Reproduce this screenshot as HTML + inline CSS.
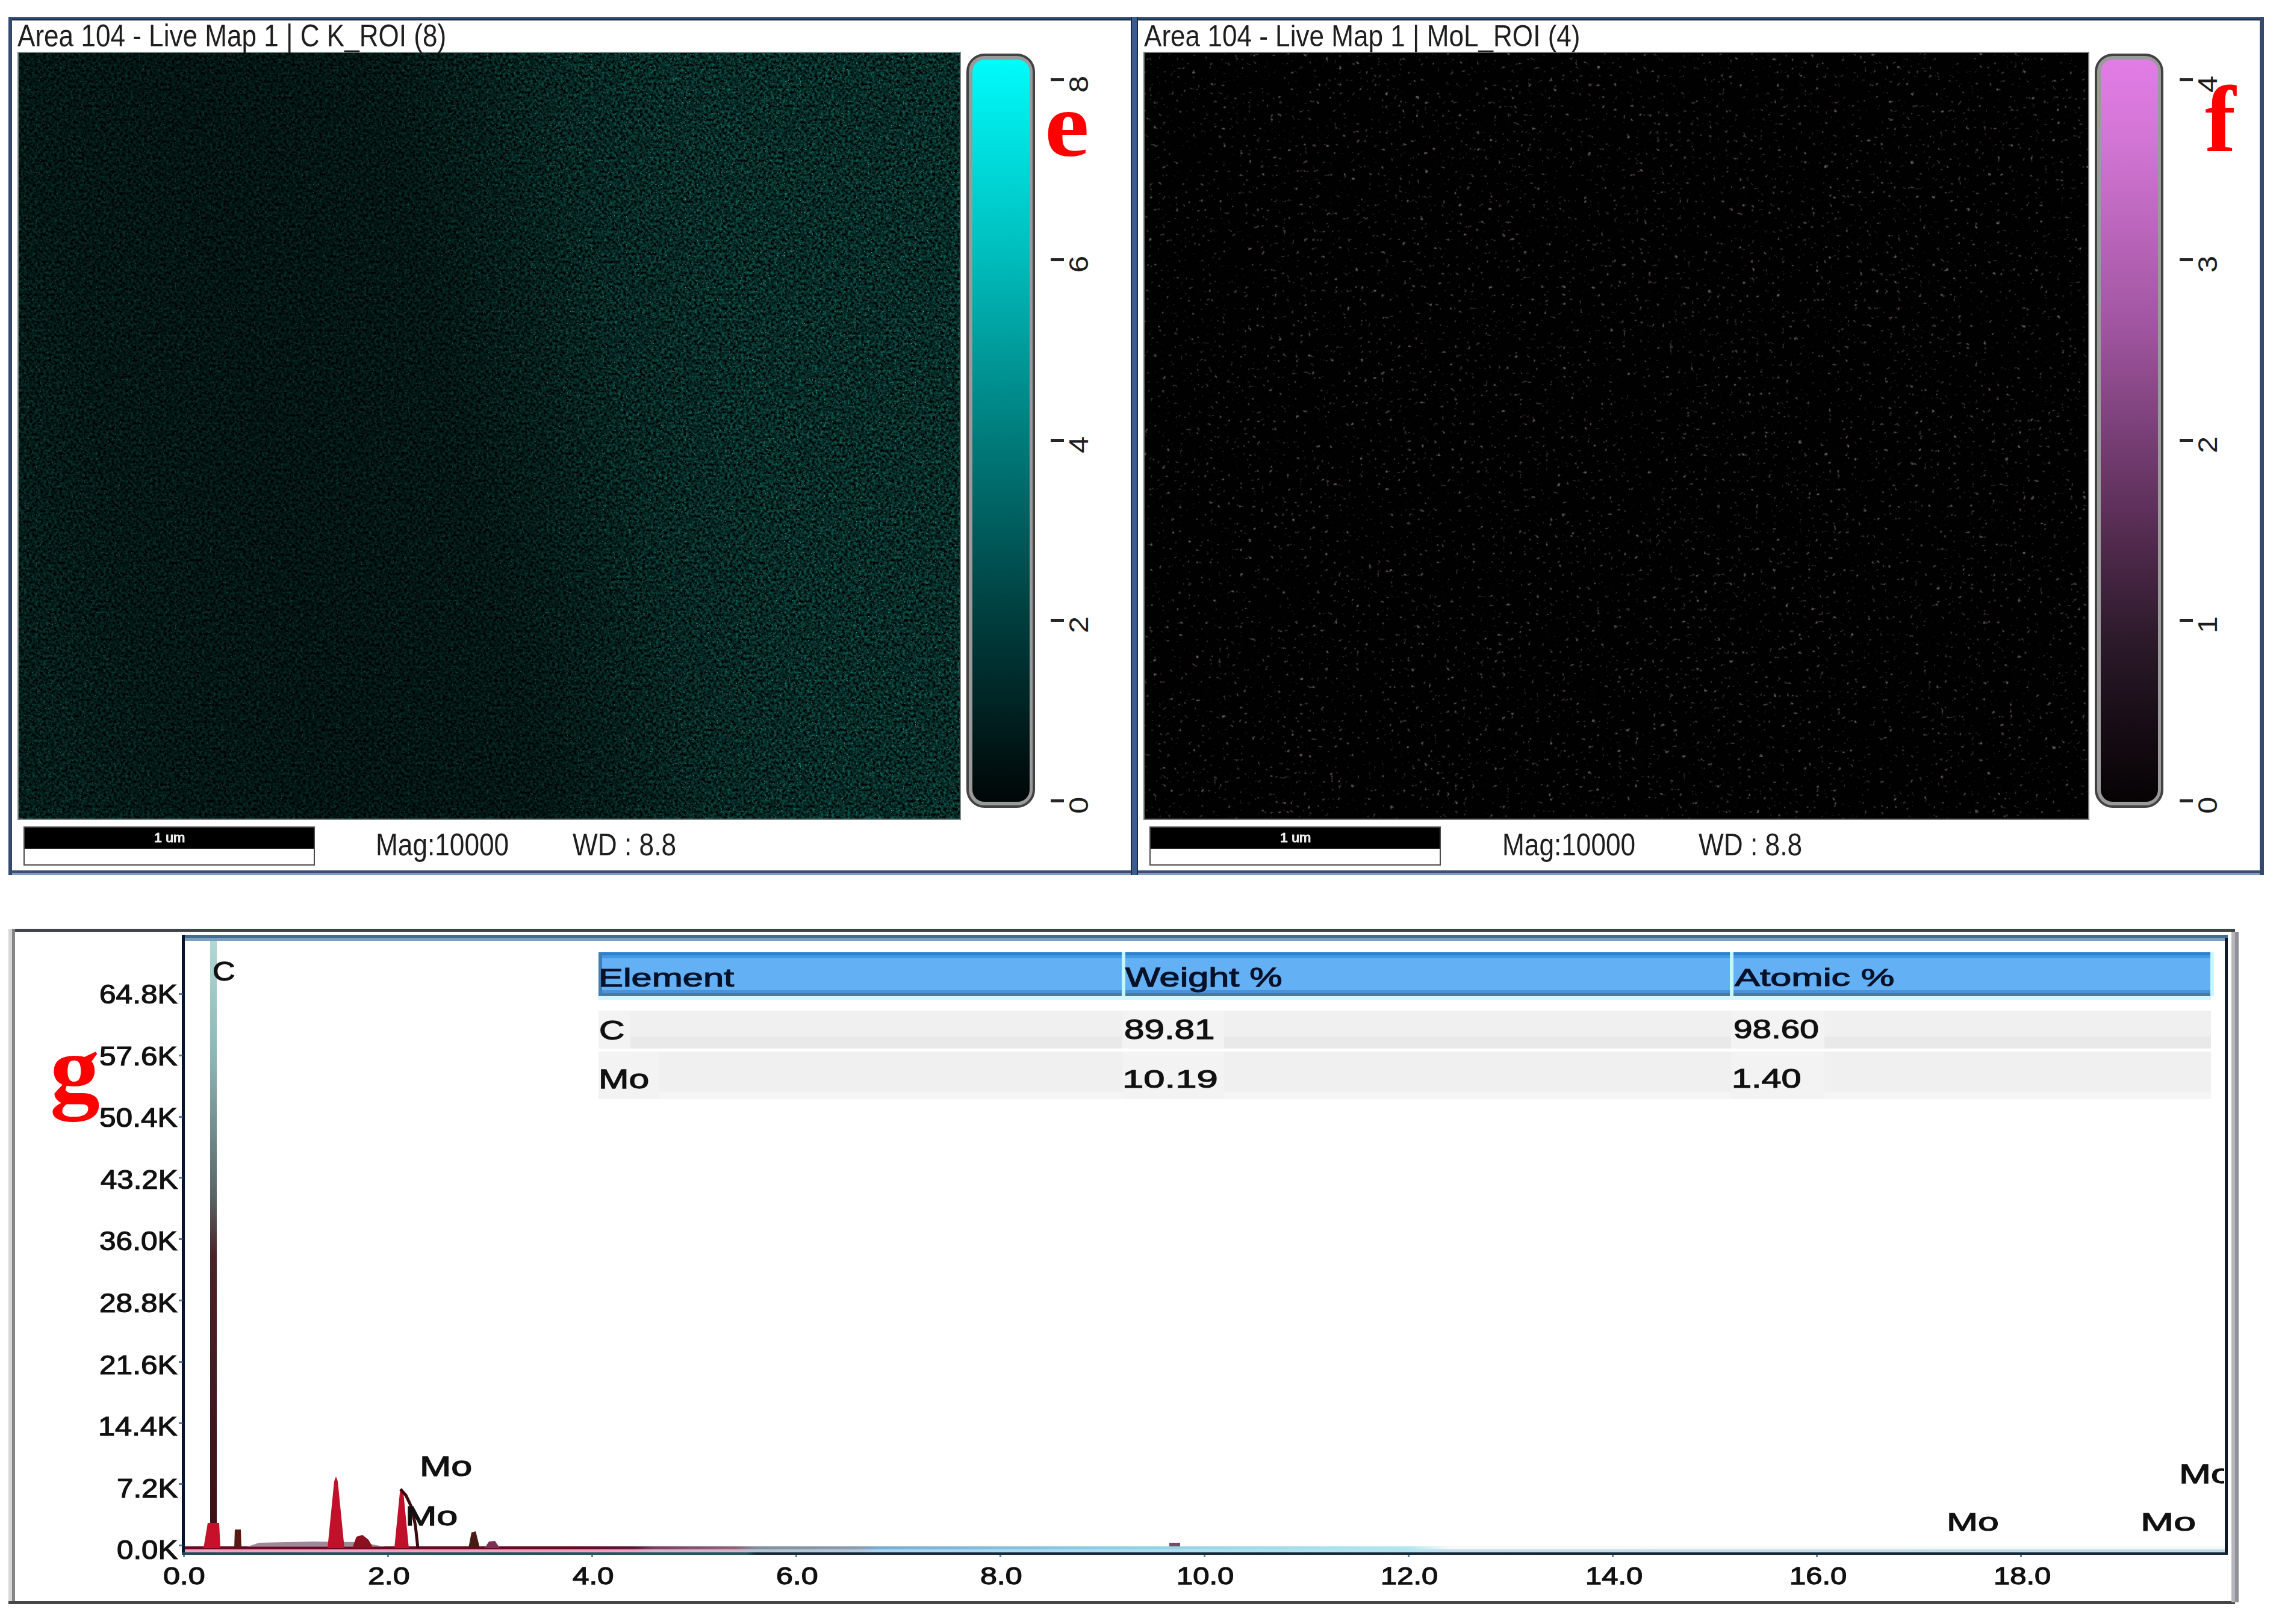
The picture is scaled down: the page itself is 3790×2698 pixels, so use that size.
<!DOCTYPE html>
<html><head><meta charset="utf-8"><title>EDS map</title>
<style>
html,body{margin:0;padding:0;background:#fff;}
body{width:3790px;height:2698px;position:relative;overflow:hidden;font-family:"Liberation Sans", sans-serif;}
.a{position:absolute;}
.t{position:absolute;white-space:nowrap;line-height:1;}
.bd{position:absolute;background:#34496c;}
.red{position:absolute;font-family:"Liberation Serif", serif;font-weight:bold;color:#ff0000;line-height:1;white-space:nowrap;}
.yl{position:absolute;font-weight:bold;font-size:47px;line-height:1;color:#111;text-align:right;width:160px;white-space:nowrap;}
.xl{position:absolute;font-weight:bold;font-size:42px;line-height:1;color:#111;text-align:center;width:160px;white-space:nowrap;}
.ml{position:absolute;font-weight:bold;font-size:46px;line-height:1;color:#111;white-space:nowrap;letter-spacing:2px;}
.tb{position:absolute;font-weight:bold;font-size:47px;line-height:1;color:#111;white-space:nowrap;letter-spacing:3px;}
</style></head><body>

<div class="bd" style="left:14px;top:28px;width:3746px;height:6px;background:linear-gradient(#3a5480 0 50%,#1f2e46 50%)"></div>
<div class="bd" style="left:14px;top:1446px;width:3746px;height:8px;background:linear-gradient(#3c4f72 0 50%,#7f9cc8 50%)"></div>
<div class="bd" style="left:14px;top:28px;width:6px;height:1426px"></div>
<div class="bd" style="left:1878px;top:28px;width:12px;height:1426px;background:linear-gradient(90deg,#1d2c48 0 17%,#3a5a90 17% 83%,#1d2c48 83%)"></div>
<div class="bd" style="left:3753px;top:28px;width:7px;height:1426px"></div>
<div class="a" style="left:29px;top:86px;width:1567px;height:1276px;background:#7a8888"></div>
<svg class="a" style="left:31px;top:88px" width="1563" height="1272" viewBox="0 0 1563 1272">
<defs><filter id="nA" x="0" y="0" width="100%" height="100%" color-interpolation-filters="sRGB">
<feTurbulence type="fractalNoise" baseFrequency="0.22" numOctaves="2" seed="7"/>
<feColorMatrix type="matrix" values="0.11 0 0 0 -0.036  0.68 0 0 0 -0.182  0.60 0 0 0 -0.160  0 0 0 0 1"/>
</filter>
<filter id="nS" x="0" y="0" width="100%" height="100%" color-interpolation-filters="sRGB">
<feTurbulence type="fractalNoise" baseFrequency="0.45" numOctaves="1" seed="23"/>
<feColorMatrix type="matrix" values="0 0 0 0 0.16  0 0 0 0 0.62  0 0 0 0 0.58  7 0 0 0 -4.6"/>
</filter>
<linearGradient id="gL" x1="-3" y1="830" x2="1753" y2="442" gradientUnits="userSpaceOnUse">
<stop offset="0" stop-color="#000" stop-opacity="0.34"/><stop offset="0.1" stop-color="#000" stop-opacity="0.46"/>
<stop offset="0.25" stop-color="#000" stop-opacity="0.52"/><stop offset="0.42" stop-color="#000" stop-opacity="0.48"/>
<stop offset="0.5" stop-color="#000" stop-opacity="0.32"/><stop offset="0.58" stop-color="#000" stop-opacity="0.12"/>
<stop offset="0.7" stop-color="#000" stop-opacity="0.0"/><stop offset="1" stop-color="#000" stop-opacity="0.0"/></linearGradient>
</defs>
<rect width="1563" height="1272" fill="#000"/>
<rect width="1563" height="1272" filter="url(#nA)"/>
<rect width="1563" height="1272" filter="url(#nS)"/>
<rect width="1563" height="1272" fill="url(#gL)"/>
</svg>
<div class="a" style="left:1899px;top:86px;width:1571px;height:1276px;background:#7a7a7a"></div>
<svg class="a" style="left:1901px;top:88px" width="1567" height="1272" viewBox="0 0 1567 1272">
<defs><filter id="nB" x="0" y="0" width="100%" height="100%" color-interpolation-filters="sRGB">
<feTurbulence type="fractalNoise" baseFrequency="0.14" numOctaves="2" seed="11"/>
<feColorMatrix type="matrix" values="0 0 0 0 0.38  0 0 0 0 0.33  0 0 0 0 0.37  5.5 0 0 0 -3.75"/>
</filter></defs>
<rect width="1567" height="1272" fill="#020102"/>
<rect width="1567" height="1272" filter="url(#nB)"/>
</svg>
<div class="a" style="left:1605px;top:89px;width:114px;height:1253px;box-sizing:border-box;border:4px solid #424242;border-radius:30px;background:#9a9a9a;padding:6px 5px 6px 6px">
<div style="width:100%;height:100%;border-radius:20px;background:linear-gradient(#00fcfc 0%,#00ecec 6%,#00c0c0 25%,#007e7e 50%,#003e3e 75%,#000606 100%)"></div></div>
<div class="a" style="left:3479px;top:89px;width:114px;height:1253px;box-sizing:border-box;border:4px solid #424242;border-radius:30px;background:#9a9a9a;padding:6px 5px 6px 6px">
<div style="width:100%;height:100%;border-radius:20px;background:linear-gradient(#e27ce6 0%,#d476d6 10%,#a055a0 36%,#7a4078 50%,#5a2e56 62%,#2c1a2a 78%,#1a0e18 88%,#060304 100%)"></div></div>
<div class="a" style="left:1745px;top:129.5px;width:22px;height:5px;background:#262626"></div>
<div class="t" style="left:1762px;top:117.5px;width:60px;height:44px;font-size:44px;text-align:center;color:#1e1e1e;transform:rotate(-90deg) scaleX(1.15)">8</div>
<div class="a" style="left:3620px;top:129.5px;width:22px;height:5px;background:#262626"></div>
<div class="t" style="left:3637px;top:117.5px;width:60px;height:44px;font-size:44px;text-align:center;color:#1e1e1e;transform:rotate(-90deg) scaleX(1.15)">4</div>
<div class="a" style="left:1745px;top:429.0px;width:22px;height:5px;background:#262626"></div>
<div class="t" style="left:1762px;top:417.0px;width:60px;height:44px;font-size:44px;text-align:center;color:#1e1e1e;transform:rotate(-90deg) scaleX(1.15)">6</div>
<div class="a" style="left:3620px;top:429.0px;width:22px;height:5px;background:#262626"></div>
<div class="t" style="left:3637px;top:417.0px;width:60px;height:44px;font-size:44px;text-align:center;color:#1e1e1e;transform:rotate(-90deg) scaleX(1.15)">3</div>
<div class="a" style="left:1745px;top:728.5px;width:22px;height:5px;background:#262626"></div>
<div class="t" style="left:1762px;top:716.5px;width:60px;height:44px;font-size:44px;text-align:center;color:#1e1e1e;transform:rotate(-90deg) scaleX(1.15)">4</div>
<div class="a" style="left:3620px;top:728.5px;width:22px;height:5px;background:#262626"></div>
<div class="t" style="left:3637px;top:716.5px;width:60px;height:44px;font-size:44px;text-align:center;color:#1e1e1e;transform:rotate(-90deg) scaleX(1.15)">2</div>
<div class="a" style="left:1745px;top:1028.0px;width:22px;height:5px;background:#262626"></div>
<div class="t" style="left:1762px;top:1016.0px;width:60px;height:44px;font-size:44px;text-align:center;color:#1e1e1e;transform:rotate(-90deg) scaleX(1.15)">2</div>
<div class="a" style="left:3620px;top:1028.0px;width:22px;height:5px;background:#262626"></div>
<div class="t" style="left:3637px;top:1016.0px;width:60px;height:44px;font-size:44px;text-align:center;color:#1e1e1e;transform:rotate(-90deg) scaleX(1.15)">1</div>
<div class="a" style="left:1745px;top:1327.5px;width:22px;height:5px;background:#262626"></div>
<div class="t" style="left:1762px;top:1315.5px;width:60px;height:44px;font-size:44px;text-align:center;color:#1e1e1e;transform:rotate(-90deg) scaleX(1.15)">0</div>
<div class="a" style="left:3620px;top:1327.5px;width:22px;height:5px;background:#262626"></div>
<div class="t" style="left:3637px;top:1315.5px;width:60px;height:44px;font-size:44px;text-align:center;color:#1e1e1e;transform:rotate(-90deg) scaleX(1.15)">0</div>
<div class="a" style="left:39px;top:1373px;width:484px;height:65px;box-sizing:border-box;border:2px solid #4a4a4a;background:linear-gradient(#000 0 57%,#fff 57%)"></div>
<div class="a" style="left:1909px;top:1373px;width:484px;height:65px;box-sizing:border-box;border:2px solid #4a4a4a;background:linear-gradient(#000 0 57%,#fff 57%)"></div>
<div class="a" style="left:14px;top:1543px;width:3698px;height:5px;background:#3e4448"></div>
<div class="a" style="left:14px;top:1543px;width:6px;height:1122px;background:#d6d6d6"></div>
<div class="a" style="left:20px;top:1543px;width:5px;height:1122px;background:#858585"></div>
<div class="a" style="left:14px;top:2660px;width:3698px;height:5px;background:#474747"></div>
<div class="a" style="left:3706px;top:1548px;width:6px;height:1114px;background:#b4b8bc"></div>
<div class="a" style="left:3712px;top:1548px;width:6px;height:1114px;background:#8e9296"></div>
<div class="a" style="left:302px;top:1553px;width:3398px;height:5px;background:#456c90"></div>
<div class="a" style="left:302px;top:1558px;width:3393px;height:5px;background:#7aa0c0"></div>
<div class="a" style="left:302px;top:1553px;width:5px;height:1030px;background:#041432"></div>
<div class="a" style="left:3695px;top:1558px;width:5px;height:1025px;background:#101a2a"></div>
<div class="a" style="left:297px;top:1650.0px;width:6px;height:3px;background:#5a7aa8"></div>
<div class="a" style="left:297px;top:1751.8px;width:6px;height:3px;background:#5a7aa8"></div>
<div class="a" style="left:297px;top:1853.6px;width:6px;height:3px;background:#5a7aa8"></div>
<div class="a" style="left:297px;top:1955.4px;width:6px;height:3px;background:#5a7aa8"></div>
<div class="a" style="left:297px;top:2057.2px;width:6px;height:3px;background:#5a7aa8"></div>
<div class="a" style="left:297px;top:2159.0px;width:6px;height:3px;background:#5a7aa8"></div>
<div class="a" style="left:297px;top:2260.8px;width:6px;height:3px;background:#5a7aa8"></div>
<div class="a" style="left:297px;top:2362.6px;width:6px;height:3px;background:#5a7aa8"></div>
<div class="a" style="left:297px;top:2464.4px;width:6px;height:3px;background:#5a7aa8"></div>
<div class="a" style="left:297px;top:2566.2px;width:6px;height:3px;background:#5a7aa8"></div>
<div class="a" style="left:304.3px;top:2583px;width:3px;height:4px;background:#5a8ab0"></div>
<div class="a" style="left:643.3px;top:2583px;width:3px;height:4px;background:#5a8ab0"></div>
<div class="a" style="left:982.2px;top:2583px;width:3px;height:4px;background:#5a8ab0"></div>
<div class="a" style="left:1321.2px;top:2583px;width:3px;height:4px;background:#5a8ab0"></div>
<div class="a" style="left:1660.1px;top:2583px;width:3px;height:4px;background:#5a8ab0"></div>
<div class="a" style="left:1999.1px;top:2583px;width:3px;height:4px;background:#5a8ab0"></div>
<div class="a" style="left:2338.1px;top:2583px;width:3px;height:4px;background:#5a8ab0"></div>
<div class="a" style="left:2677.0px;top:2583px;width:3px;height:4px;background:#5a8ab0"></div>
<div class="a" style="left:3016.0px;top:2583px;width:3px;height:4px;background:#5a8ab0"></div>
<div class="a" style="left:3354.9px;top:2583px;width:3px;height:4px;background:#5a8ab0"></div>
<div class="a" style="left:994px;top:1582px;width:2678px;height:73px;background:linear-gradient(#2c80d0 0 4.5px,#4298e2 4.5px 10px,#64b0f4 10px 63px,#4c92d8 63px 68px,#4c7a9c 68px)"></div>
<div class="a" style="left:994px;top:1582px;width:6px;height:73px;background:#3e7eb8"></div>
<div class="a" style="left:994px;top:1655px;width:2678px;height:6px;background:#d4f6fc"></div>
<div class="a" style="left:1863px;top:1582px;width:6px;height:73px;background:#c4f6ff"></div>
<div class="a" style="left:2873px;top:1582px;width:6px;height:73px;background:#c4f6ff"></div>
<div class="a" style="left:3671px;top:1582px;width:6px;height:73px;background:#c8f8ff"></div>
<div class="a" style="left:994px;top:1679px;width:2678px;height:63px;background:linear-gradient(#f0f0f0 0 43px,#e9e9e9 43px)"></div>
<div class="a" style="left:994px;top:1747px;width:2678px;height:67px;background:#f0f0f0"></div>
<div class="a" style="left:994px;top:1814px;width:2678px;height:12px;background:#f5f5f5"></div>
<div class="a" style="left:994px;top:1679px;width:53px;height:63px;background:#f3f3f3"></div>
<div class="a" style="left:994px;top:1747px;width:100px;height:79px;background:#f3f3f3"></div>
<div class="a" style="left:1864px;top:1679px;width:169px;height:63px;background:#f3f3f3"></div>
<div class="a" style="left:1864px;top:1747px;width:169px;height:79px;background:#f3f3f3"></div>
<div class="a" style="left:2875px;top:1679px;width:155px;height:63px;background:#f3f3f3"></div>
<div class="a" style="left:2875px;top:1747px;width:155px;height:79px;background:#f3f3f3"></div>
<svg class="a" style="left:0;top:0" width="3790" height="2698" viewBox="0 0 3790 2698"><defs><linearGradient id="cpk" x1="0" y1="1563" x2="0" y2="2572" gradientUnits="userSpaceOnUse"><stop offset="0" stop-color="#b0d8d4"/><stop offset="0.2" stop-color="#8ab4b2"/><stop offset="0.42" stop-color="#5a6668"/><stop offset="0.52" stop-color="#4a2228"/><stop offset="1" stop-color="#3a1014"/></linearGradient><linearGradient id="bt" x1="307" y1="0" x2="3694" y2="0" gradientUnits="userSpaceOnUse"><stop offset="0" stop-color="#6a0820"/><stop offset="0.19" stop-color="#6a0820"/><stop offset="0.22" stop-color="#5a1838"/><stop offset="0.23" stop-color="#7a4060"/><stop offset="0.27" stop-color="#906478"/><stop offset="0.28" stop-color="#8090a0"/><stop offset="0.33" stop-color="#8a9cb0"/><stop offset="0.34" stop-color="#7aacd4"/><stop offset="0.46" stop-color="#90d0e4"/><stop offset="0.6" stop-color="#b0e8ee"/><stop offset="0.62" stop-color="#f2fafc"/><stop offset="1" stop-color="#f4fafc"/></linearGradient><linearGradient id="bb" x1="307" y1="0" x2="3694" y2="0" gradientUnits="userSpaceOnUse"><stop offset="0" stop-color="#f0a0c0"/><stop offset="0.22" stop-color="#f0a0c0"/><stop offset="0.23" stop-color="#d8b4c8"/><stop offset="0.27" stop-color="#d8b4c8"/><stop offset="0.28" stop-color="#b8c4d0"/><stop offset="0.33" stop-color="#b8c8d8"/><stop offset="0.34" stop-color="#a8d8f0"/><stop offset="0.6" stop-color="#b8e4f0"/><stop offset="0.62" stop-color="#c8dce8"/><stop offset="1" stop-color="#c8dce8"/></linearGradient><linearGradient id="ax" x1="307" y1="0" x2="3694" y2="0" gradientUnits="userSpaceOnUse"><stop offset="0" stop-color="#1a4a56"/><stop offset="0.275" stop-color="#1c5860"/><stop offset="0.28" stop-color="#162838"/><stop offset="1" stop-color="#142636"/></linearGradient></defs><rect x="307" y="2569" width="3388" height="5" fill="url(#bt)"/><rect x="307" y="2574" width="3388" height="5" fill="url(#bb)"/><rect x="302" y="2579" width="3398" height="4" fill="url(#ax)"/><polygon points="410,2570 430,2563 520,2561 600,2562 640,2570" fill="#8a6a80" opacity="0.8"/><rect x="349" y="1563" width="11" height="1009" fill="url(#cpk)"/><polygon points="338,2572 345,2530 364,2530 366,2572" fill="#c8102a"/><polygon points="389,2572 390,2541 400,2541 401,2572" fill="#5a1a14"/><polygon points="544,2572 555,2461 558,2453 561,2461 572,2572" fill="#c0102a"/><polygon points="585,2572 592,2553 602,2550 612,2558 620,2572" fill="#8a1020"/><polygon points="655,2572 664,2480 667,2472 670,2480 679,2572" fill="#c0102a"/><polyline points="665,2474 674,2484 684,2505 690,2535 694,2572" fill="none" stroke="#3a0a10" stroke-width="5"/><polygon points="778,2572 783,2546 790,2544 797,2572" fill="#4a1a14"/><polygon points="805,2572 812,2561 822,2560 830,2572" fill="#7a3050"/><rect x="1942" y="2563" width="18" height="6" fill="#7a4a6a"/></svg>
<div class="t" style="left:29.20px;top:34.03px;font-family:'Liberation Sans',sans-serif;font-size:44px;color:#1e1e1e;transform-origin:0 0;transform:scale(1.0020,1.1613)">Area 104 - Live Map 1 | C K_ROI (8)</div>
<div class="t" style="left:1899.60px;top:33.87px;font-family:'Liberation Sans',sans-serif;font-size:44px;color:#1e1e1e;transform-origin:0 0;transform:scale(1.0020,1.1548)">Area 104 - Live Map 1 | MoL_ROI (4)</div>
<div class="t" style="left:624.49px;top:1378.03px;font-family:'Liberation Sans',sans-serif;font-size:44px;color:#1e1e1e;transform-origin:0 0;transform:scale(1.0046,1.1613)">Mag:10000</div>
<div class="t" style="left:950.50px;top:1377.38px;font-family:'Liberation Sans',sans-serif;font-size:44px;color:#1e1e1e;transform-origin:0 0;transform:scale(1.0053,1.1871)">WD : 8.8</div>
<div class="t" style="left:255.64px;top:1381.21px;font-family:'Liberation Sans',sans-serif;font-weight:normal;-webkit-text-stroke:1.3px currentColor;color:#111;font-size:24px;color:#eeeeee;transform-origin:0 0;transform:scale(0.9615,0.8947)">1 um</div>
<div class="t" style="left:2494.89px;top:1378.03px;font-family:'Liberation Sans',sans-serif;font-size:44px;color:#1e1e1e;transform-origin:0 0;transform:scale(1.0046,1.1613)">Mag:10000</div>
<div class="t" style="left:2820.90px;top:1377.38px;font-family:'Liberation Sans',sans-serif;font-size:44px;color:#1e1e1e;transform-origin:0 0;transform:scale(1.0053,1.1871)">WD : 8.8</div>
<div class="t" style="left:2126.04px;top:1381.21px;font-family:'Liberation Sans',sans-serif;font-weight:normal;-webkit-text-stroke:1.3px currentColor;color:#111;font-size:24px;color:#eeeeee;transform-origin:0 0;transform:scale(0.9615,0.8947)">1 um</div>
<div class="t" style="left:165.42px;top:1630.06px;font-family:'Liberation Sans',sans-serif;font-weight:normal;-webkit-text-stroke:1.3px currentColor;color:#111;font-size:46px;transform-origin:0 0;transform:scale(1.0775,0.9559)">64.8K</div>
<div class="t" style="left:165.42px;top:1732.66px;font-family:'Liberation Sans',sans-serif;font-weight:normal;-webkit-text-stroke:1.3px currentColor;color:#111;font-size:46px;transform-origin:0 0;transform:scale(1.0775,0.9559)">57.6K</div>
<div class="t" style="left:165.42px;top:1835.26px;font-family:'Liberation Sans',sans-serif;font-weight:normal;-webkit-text-stroke:1.3px currentColor;color:#111;font-size:46px;transform-origin:0 0;transform:scale(1.0775,0.9559)">50.4K</div>
<div class="t" style="left:166.50px;top:1937.86px;font-family:'Liberation Sans',sans-serif;font-weight:normal;-webkit-text-stroke:1.3px currentColor;color:#111;font-size:46px;transform-origin:0 0;transform:scale(1.0686,0.9559)">43.2K</div>
<div class="t" style="left:165.42px;top:2040.46px;font-family:'Liberation Sans',sans-serif;font-weight:normal;-webkit-text-stroke:1.3px currentColor;color:#111;font-size:46px;transform-origin:0 0;transform:scale(1.0775,0.9559)">36.0K</div>
<div class="t" style="left:165.42px;top:2143.06px;font-family:'Liberation Sans',sans-serif;font-weight:normal;-webkit-text-stroke:1.3px currentColor;color:#111;font-size:46px;transform-origin:0 0;transform:scale(1.0775,0.9559)">28.8K</div>
<div class="t" style="left:165.42px;top:2245.66px;font-family:'Liberation Sans',sans-serif;font-weight:normal;-webkit-text-stroke:1.3px currentColor;color:#111;font-size:46px;transform-origin:0 0;transform:scale(1.0775,0.9559)">21.6K</div>
<div class="t" style="left:163.21px;top:2348.26px;font-family:'Liberation Sans',sans-serif;font-weight:normal;-webkit-text-stroke:1.3px currentColor;color:#111;font-size:46px;transform-origin:0 0;transform:scale(1.0958,0.9559)">14.4K</div>
<div class="t" style="left:194.13px;top:2450.86px;font-family:'Liberation Sans',sans-serif;font-weight:normal;-webkit-text-stroke:1.3px currentColor;color:#111;font-size:46px;transform-origin:0 0;transform:scale(1.0702,0.9559)">7.2K</div>
<div class="t" style="left:194.13px;top:2553.46px;font-family:'Liberation Sans',sans-serif;font-weight:normal;-webkit-text-stroke:1.3px currentColor;color:#111;font-size:46px;transform-origin:0 0;transform:scale(1.0702,0.9559)">0.0K</div>
<div class="t" style="left:271.31px;top:2598.16px;font-family:'Liberation Sans',sans-serif;font-weight:normal;-webkit-text-stroke:1.3px currentColor;color:#111;font-size:42px;transform-origin:0 0;transform:scale(1.1930,0.9677)">0.0</div>
<div class="t" style="left:610.51px;top:2598.16px;font-family:'Liberation Sans',sans-serif;font-weight:normal;-webkit-text-stroke:1.3px currentColor;color:#111;font-size:42px;transform-origin:0 0;transform:scale(1.1930,0.9677)">2.0</div>
<div class="t" style="left:950.90px;top:2598.16px;font-family:'Liberation Sans',sans-serif;font-weight:normal;-webkit-text-stroke:1.3px currentColor;color:#111;font-size:42px;transform-origin:0 0;transform:scale(1.1724,0.9677)">4.0</div>
<div class="t" style="left:1288.91px;top:2598.16px;font-family:'Liberation Sans',sans-serif;font-weight:normal;-webkit-text-stroke:1.3px currentColor;color:#111;font-size:42px;transform-origin:0 0;transform:scale(1.1930,0.9677)">6.0</div>
<div class="t" style="left:1628.11px;top:2598.16px;font-family:'Liberation Sans',sans-serif;font-weight:normal;-webkit-text-stroke:1.3px currentColor;color:#111;font-size:42px;transform-origin:0 0;transform:scale(1.1930,0.9677)">8.0</div>
<div class="t" style="left:1954.17px;top:2598.16px;font-family:'Liberation Sans',sans-serif;font-weight:normal;-webkit-text-stroke:1.3px currentColor;color:#111;font-size:42px;transform-origin:0 0;transform:scale(1.1646,0.9677)">10.0</div>
<div class="t" style="left:2293.37px;top:2598.16px;font-family:'Liberation Sans',sans-serif;font-weight:normal;-webkit-text-stroke:1.3px currentColor;color:#111;font-size:42px;transform-origin:0 0;transform:scale(1.1646,0.9677)">12.0</div>
<div class="t" style="left:2632.57px;top:2598.16px;font-family:'Liberation Sans',sans-serif;font-weight:normal;-webkit-text-stroke:1.3px currentColor;color:#111;font-size:42px;transform-origin:0 0;transform:scale(1.1646,0.9677)">14.0</div>
<div class="t" style="left:2971.77px;top:2598.16px;font-family:'Liberation Sans',sans-serif;font-weight:normal;-webkit-text-stroke:1.3px currentColor;color:#111;font-size:42px;transform-origin:0 0;transform:scale(1.1646,0.9677)">16.0</div>
<div class="t" style="left:3310.97px;top:2598.16px;font-family:'Liberation Sans',sans-serif;font-weight:normal;-webkit-text-stroke:1.3px currentColor;color:#111;font-size:42px;transform-origin:0 0;transform:scale(1.1646,0.9677)">18.0</div>
<div class="t" style="left:994.00px;top:1603.33px;font-family:'Liberation Sans',sans-serif;font-weight:normal;-webkit-text-stroke:1.3px currentColor;color:#111;font-size:46px;color:#06122a;transform-origin:0 0;transform:scale(1.3343,0.9167)">Element</div>
<div class="t" style="left:1869.33px;top:1601.18px;font-family:'Liberation Sans',sans-serif;font-weight:normal;-webkit-text-stroke:1.3px currentColor;color:#111;font-size:46px;color:#06122a;transform-origin:0 0;transform:scale(1.3296,0.9706)">Weight %</div>
<div class="t" style="left:2881.37px;top:1603.19px;font-family:'Liberation Sans',sans-serif;font-weight:normal;-webkit-text-stroke:1.3px currentColor;color:#111;font-size:46px;color:#06122a;transform-origin:0 0;transform:scale(1.3660,0.9028)">Atomic %</div>
<div class="t" style="left:994.73px;top:1688.79px;font-family:'Liberation Sans',sans-serif;font-weight:normal;-webkit-text-stroke:1.3px currentColor;color:#111;font-size:46px;transform-origin:0 0;transform:scale(1.2742,0.9676)">C</div>
<div class="t" style="left:1866.69px;top:1686.56px;font-family:'Liberation Sans',sans-serif;font-weight:normal;-webkit-text-stroke:1.3px currentColor;color:#111;font-size:46px;transform-origin:0 0;transform:scale(1.3071,1.0059)">89.81</div>
<div class="t" style="left:2878.77px;top:1687.76px;font-family:'Liberation Sans',sans-serif;font-weight:normal;-webkit-text-stroke:1.3px currentColor;color:#111;font-size:46px;transform-origin:0 0;transform:scale(1.2301,0.9559)">98.60</div>
<div class="t" style="left:994.05px;top:1769.91px;font-family:'Liberation Sans',sans-serif;font-weight:normal;-webkit-text-stroke:1.3px currentColor;color:#111;font-size:46px;transform-origin:0 0;transform:scale(1.3167,0.9647)">Mo</div>
<div class="t" style="left:1863.86px;top:1771.22px;font-family:'Liberation Sans',sans-serif;font-weight:normal;-webkit-text-stroke:1.3px currentColor;color:#111;font-size:46px;transform-origin:0 0;transform:scale(1.3784,0.9294)">10.19</div>
<div class="t" style="left:2876.13px;top:1770.26px;font-family:'Liberation Sans',sans-serif;font-weight:normal;-webkit-text-stroke:1.3px currentColor;color:#111;font-size:46px;transform-origin:0 0;transform:scale(1.2907,0.9559)">1.40</div>
<div class="t" style="left:353.37px;top:1591.18px;font-family:'Liberation Sans',sans-serif;font-weight:normal;-webkit-text-stroke:1.3px currentColor;color:#111;font-size:46px;transform-origin:0 0;transform:scale(1.1290,0.9706)">C</div>
<div class="t" style="left:696.81px;top:2413.05px;font-family:'Liberation Sans',sans-serif;font-weight:normal;-webkit-text-stroke:1.3px currentColor;color:#111;font-size:46px;transform-origin:0 0;transform:scale(1.3633,0.9912)">Mo</div>
<div class="t" style="left:672.90px;top:2495.68px;font-family:'Liberation Sans',sans-serif;font-weight:normal;-webkit-text-stroke:1.3px currentColor;color:#111;font-size:46px;transform-origin:0 0;transform:scale(1.3667,0.9706)">Mo</div>
<div class="t" style="left:3232.93px;top:2507.46px;font-family:'Liberation Sans',sans-serif;font-weight:normal;-webkit-text-stroke:1.3px currentColor;color:#111;font-size:46px;transform-origin:0 0;transform:scale(1.3583,0.9235)">Mo</div>
<div class="t" style="left:3554.68px;top:2507.46px;font-family:'Liberation Sans',sans-serif;font-weight:normal;-webkit-text-stroke:1.3px currentColor;color:#111;font-size:46px;transform-origin:0 0;transform:scale(1.4417,0.9235)">Mo</div>
<div class="a" style="left:3560px;top:2400px;width:134px;height:90px;overflow:hidden"><div class="t" style="left:58.85px;top:26.21px;font-family:'Liberation Sans',sans-serif;font-weight:normal;-webkit-text-stroke:1.3px currentColor;color:#111;font-size:46px;transform-origin:0 0;transform:scale(1.3833,0.9647)">Mo</div></div>
<div class="t" style="left:1734.67px;top:130.75px;font-family:'Liberation Serif',serif;font-weight:bold;color:#ff0000;font-size:156px;transform-origin:0 0;transform:scale(1.0667,0.9867)">e</div>
<div class="t" style="left:3661.61px;top:121.00px;font-family:'Liberation Serif',serif;font-weight:bold;color:#ff0000;font-size:156px;transform-origin:0 0;transform:scale(0.9885,1.0000)">f</div>
<div class="t" style="left:83.16px;top:1697.09px;font-family:'Liberation Serif',serif;font-weight:bold;color:#ff0000;font-size:156px;transform-origin:0 0;transform:scale(1.0611,1.0182)">g</div>
</body></html>
